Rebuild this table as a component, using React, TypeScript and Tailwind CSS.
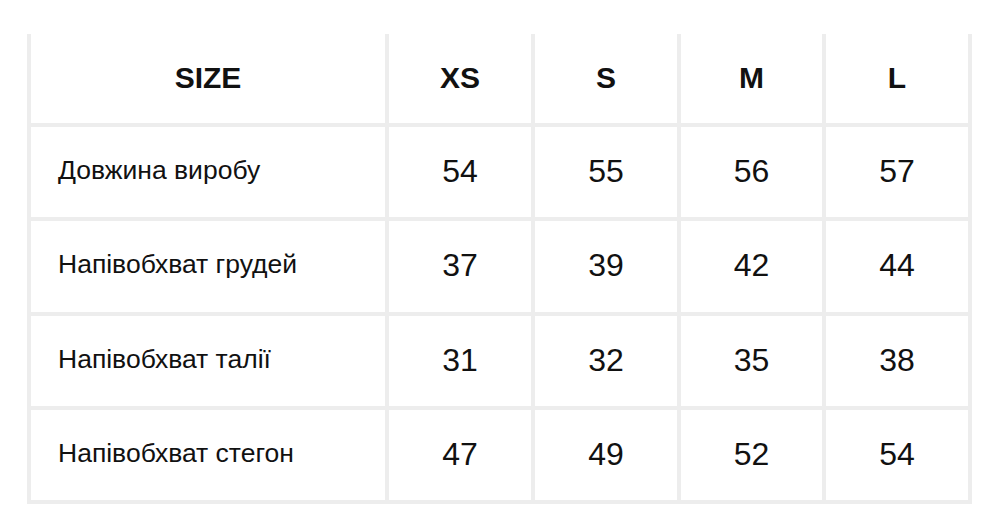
import { Fragment } from 'react'

const sizes = ['XS', 'S', 'M', 'L']

const rows = [
  { label: 'Довжина виробу', values: [54, 55, 56, 57] },
  { label: 'Напівобхват грудей', values: [37, 39, 42, 44] },
  { label: 'Напівобхват талії', values: [31, 32, 35, 38] },
  { label: 'Напівобхват стегон', values: [47, 49, 52, 54] },
]

export default function App() {
  return (
    <div className="w-[1000px] h-[517px] bg-white pt-[34px] pl-[27px] font-['Liberation_Sans',Arial,sans-serif] text-[#111]">
      <div className="inline-grid grid-cols-[354px_142px_142px_141px_142px] grid-rows-[89px_90px_91px_90px_90px] gap-[4px] bg-[#ededed] px-[4px] pb-[4px]">
        <div className="bg-white flex items-center justify-center pb-[3px] text-[30px] font-bold">SIZE</div>
        {sizes.map((s) => (
          <div key={s} className="bg-white flex items-center justify-center pb-[3px] text-[30px] font-bold">
            {s}
          </div>
        ))}
        {rows.map((row) => (
          <Fragment key={row.label}>
            <div className="bg-white flex items-center pl-[27px] pb-[3px] text-[26.5px]">
              {row.label}
            </div>
            {row.values.map((v, i) => (
              <div key={i} className="bg-white flex items-center justify-center pb-[3px] text-[32px]">
                {v}
              </div>
            ))}
          </Fragment>
        ))}
      </div>
    </div>
  )
}
